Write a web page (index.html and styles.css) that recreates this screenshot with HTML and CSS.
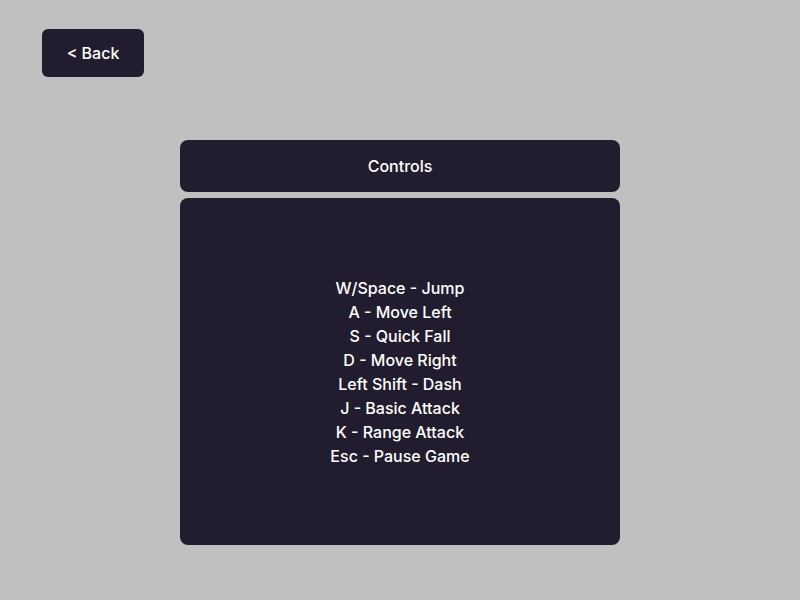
FILE: index.html
```html
<!DOCTYPE html>
<html>
<head>
<meta charset="utf-8">
<link rel="stylesheet" href="styles.css">
</head>
<body>
<div class="page">
  <div class="top">
    <button class="back">&lt; Back</button>
  </div>
  <div class="menu">
    <div class="title">Controls</div>
    <div class="panel">
      <div class="line">W/Space - Jump</div>
      <div class="line">A - Move Left</div>
      <div class="line">S - Quick Fall</div>
      <div class="line">D - Move Right</div>
      <div class="line">Left Shift - Dash</div>
      <div class="line">J - Basic Attack</div>
      <div class="line">K - Range Attack</div>
      <div class="line">Esc - Pause Game</div>
    </div>
  </div>
</div>
</body>
</html>
```
FILE: styles.css
```css
html, body {
  margin: 0;
  padding: 0;
  background: #c0c0c0;
  font-family: Inter, "Liberation Sans", sans-serif;
  color: #ffffff;
}
.page {
  width: 800px;
  height: 600px;
  display: flex;
  flex-direction: column;
}
.top {
  padding: 29px 0 0 42px;
  height: 48px;
}
.back {
  width: 102px;
  height: 48px;
  background: #221c2f;
  color: #fff;
  border: none;
  border-radius: 6px;
  font-family: Inter, "Liberation Sans", sans-serif;
  font-size: 16px;
  font-weight: 500;
  padding: 0;
}
.menu {
  margin: 63px 0 0 180px;
  width: 440px;
  display: flex;
  flex-direction: column;
  gap: 6px;
}
.title {
  height: 52px;
  background: #221c2f;
  border-radius: 8px;
  display: flex;
  align-items: center;
  justify-content: center;
  font-size: 16px;
  font-weight: 500;
}
.panel {
  height: 347px;
  background: #221c2f;
  border-radius: 8px;
  display: flex;
  flex-direction: column;
  align-items: center;
  justify-content: center;
  font-size: 16px;
  font-weight: 500;
  line-height: 24px;
}
```
